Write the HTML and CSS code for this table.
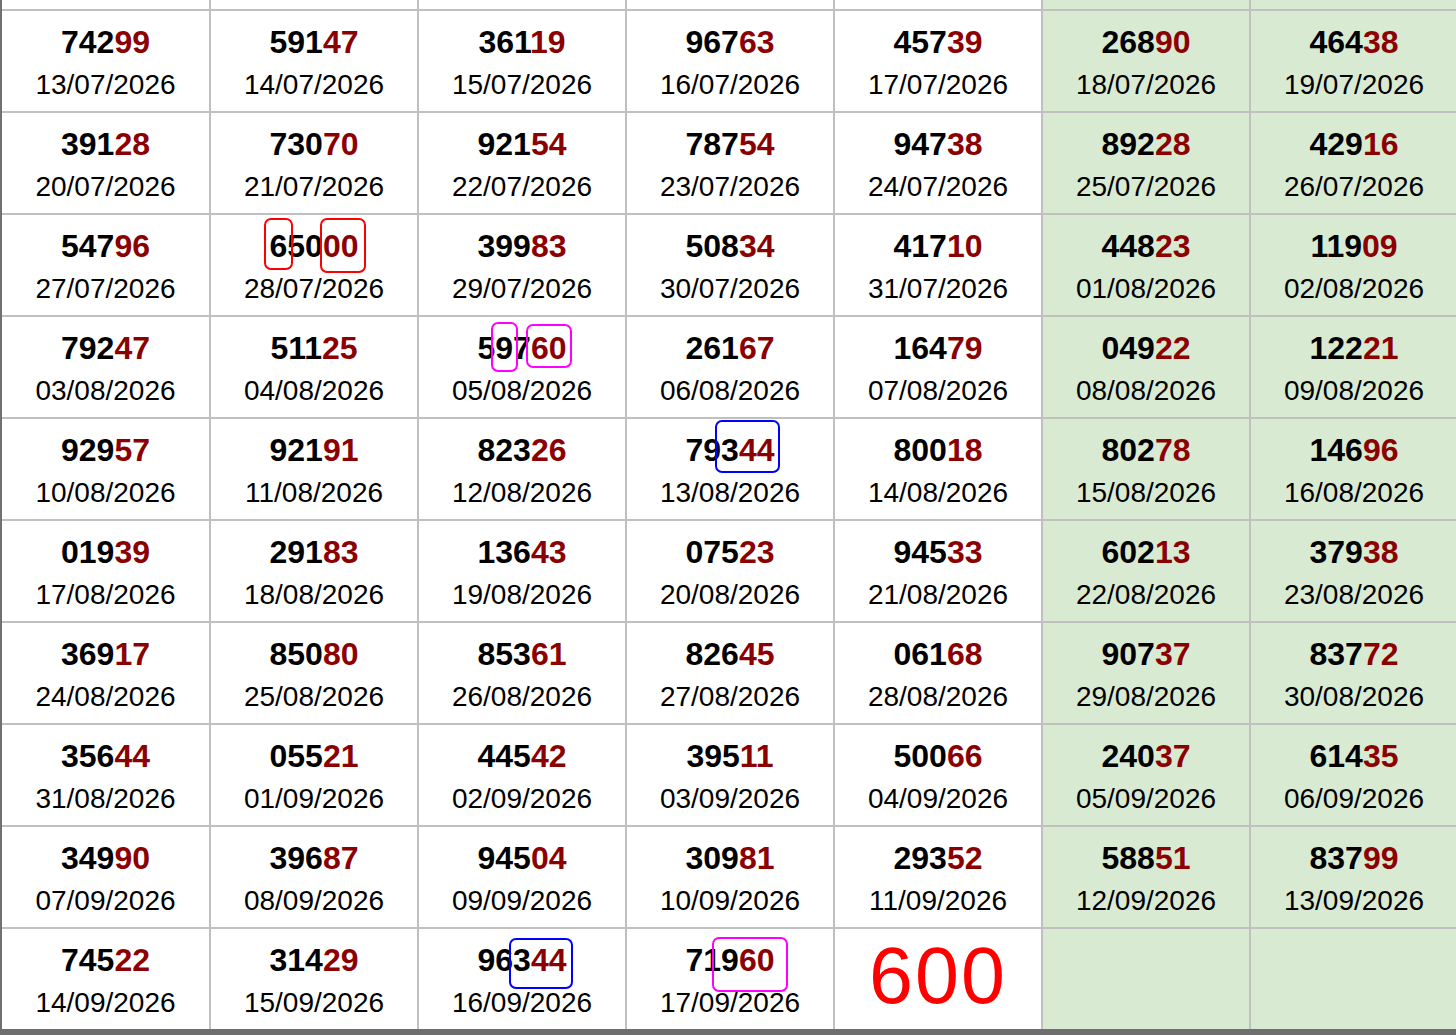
FILE: index.html
```html
<!DOCTYPE html>
<html lang="en">
<head>
<meta charset="utf-8">
<title>Results</title>
<link rel="stylesheet" href="styles.css">
</head>
<body>
<div class="page">
  <div class="frame">
    <div class="edge"></div>
    <div class="grid">
      <div class="cell top"></div><div class="cell top"></div><div class="cell top"></div><div class="cell top"></div><div class="cell top"></div><div class="cell top green"></div><div class="cell top green"></div>

      <div class="cell"><div class="num">742<span class="tail">99</span></div><div class="date">13/07/2026</div></div>
      <div class="cell"><div class="num">591<span class="tail">47</span></div><div class="date">14/07/2026</div></div>
      <div class="cell"><div class="num">361<span class="tail">19</span></div><div class="date">15/07/2026</div></div>
      <div class="cell"><div class="num">967<span class="tail">63</span></div><div class="date">16/07/2026</div></div>
      <div class="cell"><div class="num">457<span class="tail">39</span></div><div class="date">17/07/2026</div></div>
      <div class="cell green"><div class="num">268<span class="tail">90</span></div><div class="date">18/07/2026</div></div>
      <div class="cell green"><div class="num">464<span class="tail">38</span></div><div class="date">19/07/2026</div></div>

      <div class="cell"><div class="num">391<span class="tail">28</span></div><div class="date">20/07/2026</div></div>
      <div class="cell"><div class="num">730<span class="tail">70</span></div><div class="date">21/07/2026</div></div>
      <div class="cell"><div class="num">921<span class="tail">54</span></div><div class="date">22/07/2026</div></div>
      <div class="cell"><div class="num">787<span class="tail">54</span></div><div class="date">23/07/2026</div></div>
      <div class="cell"><div class="num">947<span class="tail">38</span></div><div class="date">24/07/2026</div></div>
      <div class="cell green"><div class="num">892<span class="tail">28</span></div><div class="date">25/07/2026</div></div>
      <div class="cell green"><div class="num">429<span class="tail">16</span></div><div class="date">26/07/2026</div></div>

      <div class="cell"><div class="num">547<span class="tail">96</span></div><div class="date">27/07/2026</div></div>
      <div class="cell"><div class="num">650<span class="tail">00</span></div><div class="date">28/07/2026</div><span class="mark red m1"></span><span class="mark red m2"></span></div>
      <div class="cell"><div class="num">399<span class="tail">83</span></div><div class="date">29/07/2026</div></div>
      <div class="cell"><div class="num">508<span class="tail">34</span></div><div class="date">30/07/2026</div></div>
      <div class="cell"><div class="num">417<span class="tail">10</span></div><div class="date">31/07/2026</div></div>
      <div class="cell green"><div class="num">448<span class="tail">23</span></div><div class="date">01/08/2026</div></div>
      <div class="cell green"><div class="num">119<span class="tail">09</span></div><div class="date">02/08/2026</div></div>

      <div class="cell"><div class="num">792<span class="tail">47</span></div><div class="date">03/08/2026</div></div>
      <div class="cell"><div class="num">511<span class="tail">25</span></div><div class="date">04/08/2026</div></div>
      <div class="cell"><div class="num">597<span class="tail">60</span></div><div class="date">05/08/2026</div><span class="mark magenta m3"></span><span class="mark magenta m4"></span></div>
      <div class="cell"><div class="num">261<span class="tail">67</span></div><div class="date">06/08/2026</div></div>
      <div class="cell"><div class="num">164<span class="tail">79</span></div><div class="date">07/08/2026</div></div>
      <div class="cell green"><div class="num">049<span class="tail">22</span></div><div class="date">08/08/2026</div></div>
      <div class="cell green"><div class="num">122<span class="tail">21</span></div><div class="date">09/08/2026</div></div>

      <div class="cell"><div class="num">929<span class="tail">57</span></div><div class="date">10/08/2026</div></div>
      <div class="cell"><div class="num">921<span class="tail">91</span></div><div class="date">11/08/2026</div></div>
      <div class="cell"><div class="num">823<span class="tail">26</span></div><div class="date">12/08/2026</div></div>
      <div class="cell"><div class="num">793<span class="tail">44</span></div><div class="date">13/08/2026</div><span class="mark blue m5"></span></div>
      <div class="cell"><div class="num">800<span class="tail">18</span></div><div class="date">14/08/2026</div></div>
      <div class="cell green"><div class="num">802<span class="tail">78</span></div><div class="date">15/08/2026</div></div>
      <div class="cell green"><div class="num">146<span class="tail">96</span></div><div class="date">16/08/2026</div></div>

      <div class="cell"><div class="num">019<span class="tail">39</span></div><div class="date">17/08/2026</div></div>
      <div class="cell"><div class="num">291<span class="tail">83</span></div><div class="date">18/08/2026</div></div>
      <div class="cell"><div class="num">136<span class="tail">43</span></div><div class="date">19/08/2026</div></div>
      <div class="cell"><div class="num">075<span class="tail">23</span></div><div class="date">20/08/2026</div></div>
      <div class="cell"><div class="num">945<span class="tail">33</span></div><div class="date">21/08/2026</div></div>
      <div class="cell green"><div class="num">602<span class="tail">13</span></div><div class="date">22/08/2026</div></div>
      <div class="cell green"><div class="num">379<span class="tail">38</span></div><div class="date">23/08/2026</div></div>

      <div class="cell"><div class="num">369<span class="tail">17</span></div><div class="date">24/08/2026</div></div>
      <div class="cell"><div class="num">850<span class="tail">80</span></div><div class="date">25/08/2026</div></div>
      <div class="cell"><div class="num">853<span class="tail">61</span></div><div class="date">26/08/2026</div></div>
      <div class="cell"><div class="num">826<span class="tail">45</span></div><div class="date">27/08/2026</div></div>
      <div class="cell"><div class="num">061<span class="tail">68</span></div><div class="date">28/08/2026</div></div>
      <div class="cell green"><div class="num">907<span class="tail">37</span></div><div class="date">29/08/2026</div></div>
      <div class="cell green"><div class="num">837<span class="tail">72</span></div><div class="date">30/08/2026</div></div>

      <div class="cell"><div class="num">356<span class="tail">44</span></div><div class="date">31/08/2026</div></div>
      <div class="cell"><div class="num">055<span class="tail">21</span></div><div class="date">01/09/2026</div></div>
      <div class="cell"><div class="num">445<span class="tail">42</span></div><div class="date">02/09/2026</div></div>
      <div class="cell"><div class="num">395<span class="tail">11</span></div><div class="date">03/09/2026</div></div>
      <div class="cell"><div class="num">500<span class="tail">66</span></div><div class="date">04/09/2026</div></div>
      <div class="cell green"><div class="num">240<span class="tail">37</span></div><div class="date">05/09/2026</div></div>
      <div class="cell green"><div class="num">614<span class="tail">35</span></div><div class="date">06/09/2026</div></div>

      <div class="cell"><div class="num">349<span class="tail">90</span></div><div class="date">07/09/2026</div></div>
      <div class="cell"><div class="num">396<span class="tail">87</span></div><div class="date">08/09/2026</div></div>
      <div class="cell"><div class="num">945<span class="tail">04</span></div><div class="date">09/09/2026</div></div>
      <div class="cell"><div class="num">309<span class="tail">81</span></div><div class="date">10/09/2026</div></div>
      <div class="cell"><div class="num">293<span class="tail">52</span></div><div class="date">11/09/2026</div></div>
      <div class="cell green"><div class="num">588<span class="tail">51</span></div><div class="date">12/09/2026</div></div>
      <div class="cell green"><div class="num">837<span class="tail">99</span></div><div class="date">13/09/2026</div></div>

      <div class="cell"><div class="num">745<span class="tail">22</span></div><div class="date">14/09/2026</div></div>
      <div class="cell"><div class="num">314<span class="tail">29</span></div><div class="date">15/09/2026</div></div>
      <div class="cell"><div class="num">963<span class="tail">44</span></div><div class="date">16/09/2026</div><span class="mark blue m6"></span></div>
      <div class="cell"><div class="num">719<span class="tail">60</span></div><div class="date">17/09/2026</div><span class="mark magenta m7"></span></div>
      <div class="cell total"><div class="big">600</div></div>
      <div class="cell green"></div>
      <div class="cell green"></div>
    </div>
  </div>
  <div class="bottom-bar"></div>
</div>
</body>
</html>
```

FILE: styles.css
```css
html, body {
  margin: 0;
  padding: 0;
  background: #ffffff;
  overflow: hidden;
}

.page {
  width: 1456px;
  height: 1035px;
  display: flex;
  flex-direction: column;
  overflow: hidden;
  font-family: "Liberation Sans", Arial, Helvetica, sans-serif;
}

.frame {
  display: flex;
  flex-direction: row;
  height: 1029px;
  overflow: hidden;
}

.edge {
  width: 2px;
  flex: 0 0 2px;
  background: #707070;
}

.grid {
  display: grid;
  grid-template-columns: 207px repeat(6, 206px);
  grid-template-rows: 9px repeat(10, 100px);
  gap: 2px;
  background: #c0c0c0;
  flex: 0 0 auto;
}

.cell {
  position: relative;
  background: #ffffff;
  padding-top: 9px;
  box-sizing: border-box;
  text-align: center;
  color: #000000;
}

.cell.top {
  padding-top: 0;
}

.cell.green {
  background: #d9ead3;
}

.num {
  font-size: 32px;
  font-weight: bold;
  line-height: 44px;
  white-space: nowrap;
}

.tail {
  color: #8b0000;
}

.date {
  font-size: 28px;
  line-height: 42px;
  white-space: nowrap;
}

.cell.total {
  padding-top: 0;
}

.big {
  font-size: 79px;
  line-height: 94px;
  letter-spacing: 2px;
  color: #ff0000;
  white-space: nowrap;
}

.mark {
  position: absolute;
  box-sizing: border-box;
  border: 2px solid;
  border-radius: 7px;
  z-index: 2;
}

.mark.red { border-color: #ff0000; }
.mark.magenta { border-color: #ff00ff; }
.mark.blue { border-color: #0000ff; }

.m1 { left: 53px; top: 3px; width: 29px; height: 52px; }
.m2 { left: 109px; top: 3px; width: 46px; height: 55px; }
.m3 { left: 72px; top: 5px; width: 27px; height: 50px; }
.m4 { left: 107px; top: 7px; width: 46px; height: 44px; }
.m5 { left: 88px; top: 1px; width: 65px; height: 53px; }
.m6 { left: 90px; top: 9px; width: 64px; height: 51px; }
.m7 { left: 85px; top: 8px; width: 76px; height: 55px; }

.bottom-bar {
  height: 6px;
  flex: 0 0 6px;
  background: #6e6e6e;
}
```
